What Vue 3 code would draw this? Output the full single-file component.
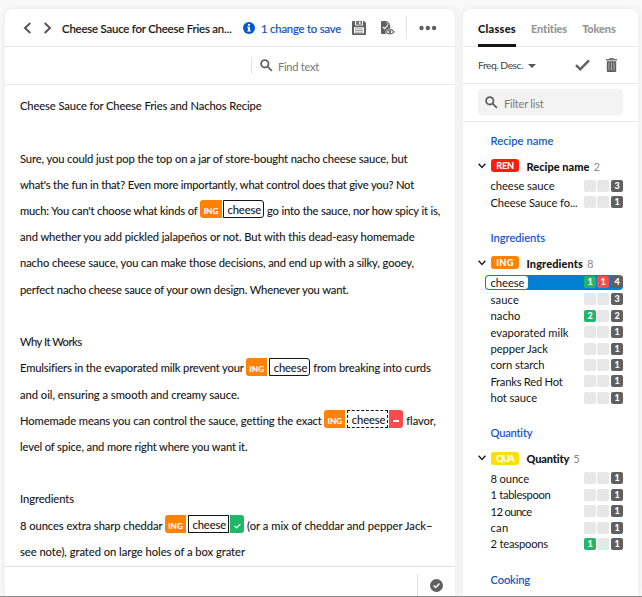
<script setup>
// Each run of text carries the width of its measure; letter spacing takes up the difference.
const fitText = (el, { value }) => {
  if (!value) return
  el.style.letterSpacing = '0px'
  const natural = el.getBoundingClientRect().width
  const count = el.textContent.length
  if (count) el.style.letterSpacing = `${(value - natural) / count}px`
}
const vFit = { mounted: fitText }

const lines = [
  [{ t: 'Cheese Sauce for Cheese Fries and Nachos Recipe', w: 241.5 }],
  [],
  [{ t: 'Sure, you could just pop the top on a jar of store-bought nacho cheese sauce, but', w: 387.5 }],
  [{ t: "what's the fun in that? Even more importantly, what control does that give you? Not", w: 394 }],
  [{ t: "much: You can't choose what kinds of", w: 177.5 }, { tag: 'cheese', kind: 'plain tight' }, { t: 'go into the sauce, nor how spicy it is,', w: 173 }],
  [{ t: 'and whether you add pickled jalapeños or not. But with this dead-easy homemade', w: 394.5 }],
  [{ t: 'nacho cheese sauce, you can make those decisions, and end up with a silky, gooey,', w: 394 }],
  [{ t: 'perfect nacho cheese sauce of your own design. Whenever you want.', w: 328.5 }],
  [],
  [{ t: 'Why It Works', w: 61.5 }],
  [{ t: 'Emulsifiers in the evaporated milk prevent your', w: 223.5 }, { tag: 'cheese', kind: 'plain' }, { t: 'from breaking into curds', w: 117.5 }],
  [{ t: 'and oil, ensuring a smooth and creamy sauce.', w: 219.5 }],
  [{ t: 'Homemade means you can control the sauce, getting the exact', w: 301.5 }, { tag: 'cheese', kind: 'rejected' }, { t: 'flavor,', w: 29.5 }],
  [{ t: 'level of spice, and more right where you want it.', w: 227.5 }],
  [],
  [{ t: 'Ingredients', w: 54 }],
  [{ t: '8 ounces extra sharp cheddar', w: 142.5 }, { tag: 'cheese', kind: 'accepted' }, { t: '(or a mix of cheddar and pepper Jack–', w: 185.5 }],
  [{ t: 'see note), grated on large holes of a box grater', w: 225 }],
]

const groups = [
  { title: 'Recipe name', tw: 63, code: 'REN', cls: 'ren', nw: 63, n: 2, rows: [
    ['cheese sauce', 64, '', '', 3], ['Cheese Sauce fo...', 87, '', '', 1]] },
  { title: 'Ingredients', tw: 54.5, code: 'ING', cls: 'ing', nw: 56.5, n: 8, rows: [
    ['cheese', 34, 1, 1, 4, true], ['sauce', 28.5, '', '', 3], ['nacho', 30, 2, '', 2],
    ['evaporated milk', 78, '', '', 1], ['pepper Jack', 57.5, '', '', 1], ['corn starch', 54, '', '', 1],
    ['Franks Red Hot', 72, '', '', 1], ['hot sauce', 46.5, '', '', 1]] },
  { title: 'Quantity', tw: 42, code: 'QUA', cls: 'qua', nw: 43, n: 5, rows: [
    ['8 ounce', 38.5, '', '', 1], ['1 tablespoon', 60, '', '', 1], ['12 ounce', 41, '', '', 1],
    ['can', 18, '', '', 1], ['2 teaspoons', 57.5, 1, '', 1]] },
  { title: 'Cooking', tw: 39.5 },
]
</script>

<template>
  <div class="screen">
    <main class="card doc">
      <header class="doc-head">
        <svg class="prev" width="8" height="12" viewBox="0 0 8 12"><path d="M7.3 1 2 6l5.3 5" /></svg>
        <svg class="next" width="8" height="12" viewBox="0 0 8 12"><path d="m.7 1 5.3 5-5.3 5" /></svg>
        <span class="doc-title"><span v-fit="169.5">Cheese Sauce for Cheese Fries an...</span></span>
        <svg class="info" width="12" height="12" viewBox="0 0 12 12">
          <circle cx="6" cy="6" r="6" fill="#0758cf" />
          <path d="M5 2h2v1.8H5zM4.2 4.8H7v3.7h.8v1H4.2v-1H5V5.8h-.8z" fill="#fff" />
        </svg>
        <span class="changes"><span v-fit="80">1 change to save</span></span>
        <svg class="save" width="14" height="14" viewBox="0 0 14 14">
          <path d="M1 0h2v4.5h8V0h1l2 2v11a1 1 0 0 1-1 1H1a1 1 0 0 1-1-1V1a1 1 0 0 1 1-1z" fill="#5f5f5f" />
          <path d="M4 0h6v3.7H4z" fill="#777" /><path d="M7 .7h1.5v2H7z" fill="#fff" />
          <path d="M2 6.3h10v6H2z" fill="#fff" />
          <path d="M3 7.8h8M3 9.5h8M3 11.2h8" stroke="#888" stroke-width=".8" />
        </svg>
        <svg class="review" width="14" height="14" viewBox="0 0 14 14">
          <path d="M0 1a1 1 0 0 1 1-1h5l3.2 3.2v4.2C6.8 7.6 5 9 4 10.7L5 13H1a1 1 0 0 1-1-1z" fill="#606060" />
          <path d="M6 0v3.3h3.2" fill="none" stroke="#ddd" stroke-width=".6" />
          <path d="m2 6 1.6 1.6L6.8 4.3" fill="none" stroke="#fff" stroke-width="1.2" />
          <path d="M4.7 10.8q4.2-4.4 8.4 0-4.2 4.1-8.4 0z" fill="#fff" stroke="#666" stroke-width="1.1" />
          <circle cx="8.9" cy="10.7" r="1.3" fill="#606060" />
        </svg>
        <span class="rule"></span>
        <svg class="more" width="18" height="6" viewBox="0 0 18 6"><circle cx="2.5" cy="3" r="2.2" /><circle cx="8.8" cy="3" r="2.2" /><circle cx="15.1" cy="3" r="2.2" /></svg>
      </header>

      <div class="find">
        <svg class="lens" width="13" height="13" viewBox="0 0 13 13"><circle cx="4.8" cy="4.8" r="3.7" /><path d="m7.6 7.6 4.3 4.3" /></svg>
        <span v-fit="41">Find text</span>
      </div>

      <article class="text">
        <div v-for="(line, i) in lines" :key="i" class="line">
          <template v-for="(run, j) in line" :key="j">
            <span v-if="run.t" v-fit="run.w" class="run">{{ run.t }}</span>
            <span v-else class="mention" :class="run.kind">
              <b class="code">ING</b>
              <span class="word"><span v-fit="33.5">{{ run.tag }}</span></span>
              <i v-if="run.kind === 'rejected'" class="verdict no"><svg width="6" height="2"><path d="M0 1h6" stroke="#fff" stroke-width="2" /></svg></i>
              <i v-if="run.kind === 'accepted'" class="verdict yes"><svg width="7" height="6" viewBox="0 0 7 6"><path d="m.6 3 2 2L6.4.8" /></svg></i>
            </span>
          </template>
        </div>
      </article>

      <footer class="doc-foot">
        <div class="foot-cell">
          <svg width="13" height="13" viewBox="0 0 13 13"><circle cx="6.5" cy="6.5" r="6.5" fill="#606060" /><path d="m3.7 6.5 2 2 3.8-4" fill="none" stroke="#fff" stroke-width="1.4" /></svg>
        </div>
      </footer>
    </main>

    <aside class="card side">
      <nav class="tabs">
        <span class="tab active"><span v-fit="38">Classes</span></span>
        <span class="tab"><span v-fit="36.5">Entities</span></span>
        <span class="tab"><span v-fit="33.5">Tokens</span></span>
      </nav>
      <div class="sort">
        <span v-fit="45">Freq. Desc.</span>
        <svg class="caret" width="8" height="4" viewBox="0 0 8 4"><path d="M0 0h8L4 4z" fill="#555" /></svg>
        <svg class="tick" width="15" height="12" viewBox="0 0 15 12"><path d="m1 6.2 4.2 4.1L14 1.3" /></svg>
        <svg class="bin" width="11" height="14" viewBox="0 0 11 14">
          <path d="M3.5 0h4l.7 1H11v1.6H0V1h2.8z" fill="#777" />
          <path d="M.8 3.2h9.4V13a1 1 0 0 1-1 1H1.8a1 1 0 0 1-1-1z" fill="#606060" />
          <path d="M3 4.6v7.8M5.5 4.6v7.8M8 4.6v7.8" stroke="#c4c4c4" stroke-width=".8" />
        </svg>
      </div>
      <div class="filter-row">
        <div class="filter">
          <svg class="lens" width="13" height="13" viewBox="0 0 13 13"><circle cx="4.8" cy="4.8" r="3.7" /><path d="m7.6 7.6 4.3 4.3" /></svg>
          <span v-fit="39.5">Filter list</span>
        </div>
      </div>
      <section v-for="g in groups" :key="g.title" class="group">
        <h2><span v-fit="g.tw">{{ g.title }}</span></h2>
        <div v-if="g.code" class="group-head">
          <svg width="8" height="6" viewBox="0 0 8 6"><path d="m.6.8 3.4 3.6L7.4.8" /></svg>
          <b class="pill" :class="g.cls"><span v-fit="17.5">{{ g.code }}</span></b>
          <b class="name"><span v-fit="g.nw">{{ g.title }}</span></b>
          <span class="total">{{ g.n }}</span>
        </div>
        <div v-for="r in g.rows" :key="r[0]" class="row" :class="{ selected: r[5] }">
          <span class="label"><span v-fit="r[1]">{{ r[0] }}</span></span>
          <b class="count" :class="{ green: r[2] }">{{ r[2] }}</b>
          <b class="count" :class="{ red: r[3] }">{{ r[3] }}</b>
          <b class="count dark">{{ r[4] }}</b>
        </div>
      </section>
    </aside>
  </div>
</template>

<style>
body { margin: 0; overflow: hidden; }
</style>

<style scoped>
* { box-sizing: border-box; }
.screen {
  width: 642px; height: 597px; overflow: hidden; display: flex; gap: 8px;
  padding: 9px 4px 0 5px; background: #f9f9f9; border-bottom: 1px solid #8b8b8b;
  font-family: Lato, "Liberation Sans", sans-serif; font-size: 11.2px; color: #151515;
  white-space: nowrap;
}
svg { display: block; flex: none; }
span { flex: none; }
.card { background: #fff; border-radius: 8px 8px 0 0; box-shadow: 0 0 8px rgba(0, 0, 0, .075); overflow: hidden; flex: none; }
.doc { width: 450px; height: 588px; display: flex; flex-direction: column; }
.doc-head { height: 38px; flex: none; border-bottom: 1px solid #e8e8e8; display: flex; align-items: center; padding-left: 18px; }
.prev, .next { fill: none; stroke: #555; stroke-width: 2; }
.next { margin-left: 13px; }
.doc-title { margin-left: 10px; width: 171px; padding-top: 1px; font-weight: 500; font-size: 11.4px; -webkit-text-stroke: .15px #151515; }
.info { margin-left: 10px; }
.changes { margin-left: 6px; width: 80px; padding-top: 1px; color: #1150c8; -webkit-text-stroke: .2px #1150c8; }
.save { margin-left: 11px; }
.review { margin-left: 15px; }
.rule { width: 1px; height: 23px; background: #e5e5e5; margin-left: 11px; }
.more { margin-left: 12px; fill: #606060; }
.find { height: 38px; flex: none; border-bottom: 1px solid #e8e8e8; display: flex; align-items: center; padding-left: 255px; color: #777; gap: 5px; }
.find::before { content: ''; width: 1px; height: 17px; background: #e5e5e5; margin-left: -9px; margin-right: 3px; }
.lens { fill: none; stroke: #606060; stroke-width: 1.8; }
.find span { padding-top: 1px; }
.text { flex: 1; min-height: 0; padding: 8px 0 0 15px; overflow: hidden; }
.line { height: 26.22px; display: flex; align-items: center; line-height: 16px; -webkit-text-stroke: .1px #151515; }
.mention { display: flex; height: 18px; margin: -3px 3px 0 2.5px; flex: none; }
.code { width: 21px; background: #ff8200; color: #fff; border-radius: 3px 0 0 3px; text-align: center; font-size: 8.2px; font-weight: 900; line-height: 22px; margin-right: 2px; -webkit-text-stroke: 0; }
.tight .code { width: 22px; margin-right: 1px; }
.mention .word { width: 41px; border: 1px solid #151515; border-radius: 0 3px 3px 0; padding-left: 3.5px; line-height: 18px; }
.rejected .word { border-style: dashed; border-radius: 0; }
.accepted .word { border-radius: 0; }
.verdict { width: 14px; margin-left: 1px; border-radius: 0 3px 3px 0; display: flex; align-items: center; justify-content: center; padding-top: 3px; }
.no { background: #ff4b4b; }
.yes { background: #20b76b; }
.yes path { fill: none; stroke: #fff; stroke-width: 1.2; }
.doc-foot { height: 31px; flex: none; border-top: 1px solid #dedede; display: flex; justify-content: flex-end; padding-top: 7px; }
.foot-cell { width: 38px; border-left: 1px solid #e0e0e0; padding: 5px 0 0 12px; }

.side { width: 175px; height: 588px; }
.tabs { height: 38px; border-bottom: 1px solid #e8e8e8; padding-left: 15px; display: flex; gap: 15px; font-weight: 900; font-size: 11px; color: #969696; }
.tab { height: 38px; line-height: 39px; }
.active { color: #151515; border-bottom: 3px solid #151515; }
.sort { height: 37px; border-bottom: 1px solid #e8e8e8; padding-left: 15px; display: flex; align-items: center; font-size: 10.3px; color: #444; }
.caret { margin: 2px 0 0 5px; }
.tick { margin-left: 39px; fill: none; stroke: #606060; stroke-width: 2.4; }
.bin { margin-left: 16px; }
.filter-row { height: 38px; border-bottom: 1px solid #e8e8e8; padding: 5px 15px 0; }
.filter { height: 26px; width: 145px; border-radius: 4px; background: #f3f3f3; display: flex; align-items: center; gap: 6px; padding-left: 7px; color: #7c7c7c; }
.filter span { padding-top: 2px; }
.group { padding-bottom: 17.4px; }
.filter-row + .group { padding-top: 9px; }
h2 { margin: 0; height: 20px; line-height: 20px; padding-left: 27.5px; font-size: 11.2px; font-weight: 500; color: #1455c8; -webkit-text-stroke: .1px #1455c8; }
h2 span, .label span, .word span, .doc-title span, .changes span, .tab span, .pill span, .name span { display: inline-block; }
.group-head { height: 26.7px; padding: 6px 0 3px 15px; display: flex; align-items: center; }
.group-head svg path { fill: none; stroke: #222; stroke-width: 1.5; }
.pill { width: 28px; height: 13px; margin-left: 5px; border-radius: 3px; color: #fff; font-size: 9.2px; font-weight: 900; line-height: 13px; text-align: center; }
.ren { background: #ff1c0c; }
.ing { background: #ff8200; }
.qua { background: #fbe000; }
.name { margin-left: 7.5px; font-weight: 900; font-size: 11px; padding-top: 1px; }
.total { margin-left: 4px; color: #8b8b8b; padding-top: 1px; }
.row { height: 16.43px; width: 138px; margin-left: 22px; display: flex; align-items: center; border-radius: 4px; }
.label { width: 99px; padding-left: 5.5px; line-height: 15px; }
.count { width: 12px; height: 12px; margin-right: 1px; border-radius: 2px; background: #e7e7e7; color: #fff; font-size: 9px; font-weight: 900; line-height: 12px; text-align: center; flex: none; }
.dark { background: #606060; margin: 0 0 0 1px; }
.green { background: #20b76b; }
.red { background: #ff4b4b; }
.selected { height: 15px; margin-bottom: 1.43px; background: #0080d0; }
.selected .label { width: 42px; height: 13px; line-height: 13px; margin: 0 56px 0 1px; padding-left: 4.5px; background: #fff; border-radius: 3px; }
</style>
